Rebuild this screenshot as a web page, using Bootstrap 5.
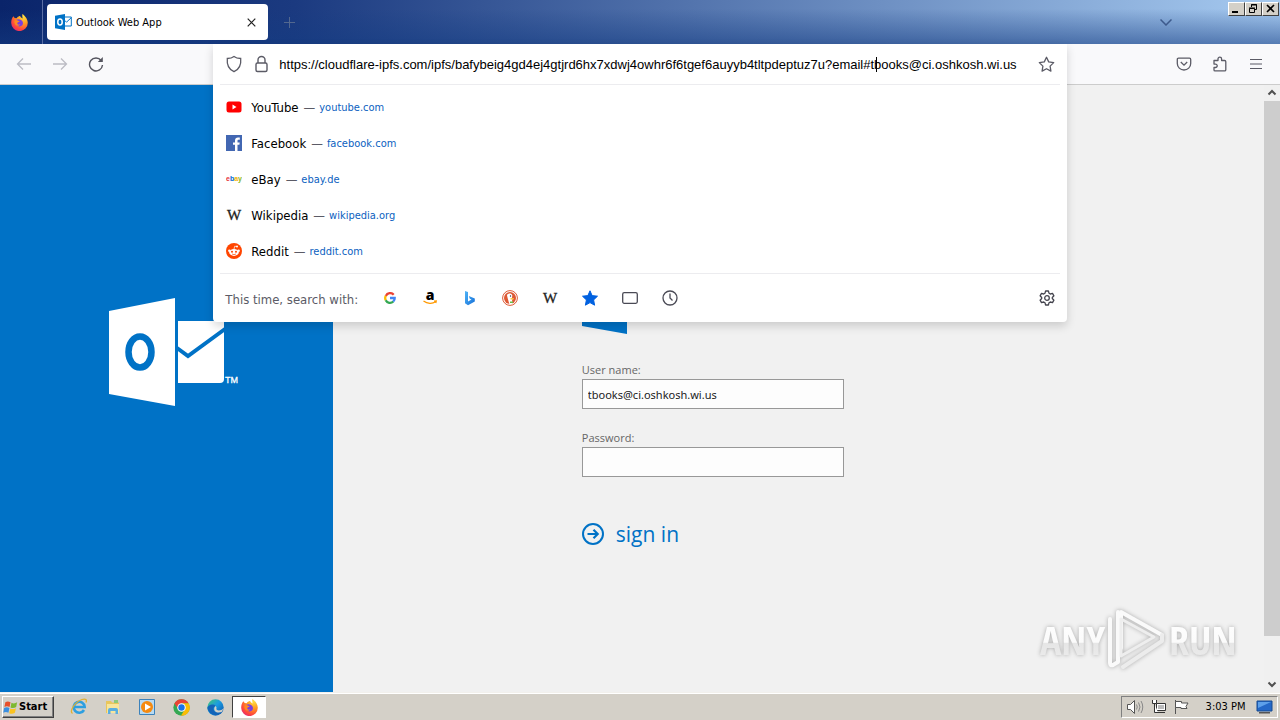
<!doctype html>
<html lang="en">
<head>
<meta charset="utf-8">
<meta name="viewport" content="width=device-width, initial-scale=1">
<title>Outlook Web App</title>
<link href="https://cdn.jsdelivr.net/npm/bootstrap@5.3.0/dist/css/bootstrap.min.css" rel="stylesheet">
<style>
body{font-family:"DejaVu Sans Condensed","Liberation Sans",sans-serif;font-size:13px;line-height:18px;color:#000;background:#f1f1f1}
svg{display:block;flex:none}
button{font:inherit;color:inherit;padding:0;border:0;background:none}
.titlebar{height:44px;background:linear-gradient(180deg,rgba(20,60,130,0) 20%,rgba(20,60,130,.55)),linear-gradient(90deg,#0a246a,#1b3a80 23%,#a6caf0)}
.fx{width:43px;padding-right:3px;border-right:1px solid #5a6ea5}
.tab{width:221px;height:36px;margin:4px 0 0 4px;border-radius:4px;background:#fff;font-size:11px;line-height:20px}
.tab span{padding-top:2px}
.plus{color:#53688f}
.winbtns{padding:2px 1px 0 0}
.winbtn{width:17px;height:14px;background:#d4d0c8;border:1px solid;border-color:#fff #404040 #404040 #fff}
.toolbar{height:41px;background:#f9f9fb;border-bottom:1px solid #ccc;color:#5b5b66}
.urlpanel{top:0;left:0;right:0;z-index:5;background:#fff;border-radius:0 0 4px 4px;box-shadow:0 4px 10px rgba(0,0,0,.16);color:#5b5b66}
.urlrow{height:40px;margin:0 8px 0 12px}
.urlfield{font:13px/18px "Liberation Sans",sans-serif;color:#000;border:0;outline:0;padding:2px 0 0;background:none}
.caret{left:79%;width:1px;top:3px;height:15px;margin-left:-2px;background:#000}
.rule{border-top:1px solid #ececef;margin:0 7px}
.hit{height:36px;color:#000;text-decoration:none;padding-left:13px}
.hit span{padding-top:2px}
.hit .title{margin-left:9px}
.hit .dash{color:#5b5b66;margin:0 4px 0 5px}
.hit .site{color:#0c5fbf;font-size:11px}
.engines{height:48px;padding:0 12px 0 12px}
.engine{width:40px;height:32px}
.side{width:26%;background:#0072c6;padding:213px 0 0 109px}
.login{padding-left:249px;color:#666;font-family:"Open Sans",sans-serif;font-size:11px}
.brand{margin-bottom:28px}
.login label{line-height:16px;margin-bottom:1px}
.second{margin-top:21px}
.login input{width:262px;height:30px;border:1px solid #989898;border-radius:0;background:#fdfdfd;padding:0 5px;color:#222;font:11px "Noto Sans",sans-serif}
.signin{color:#0072c6;font-size:21px;line-height:28px;margin-top:43px}
.scroll{width:16px;background:#f0f0f0}
.thumb{height:93%;background:#cdcdcd}
.watermark{right:44px;bottom:14px;filter:drop-shadow(0 0 2px #aaa)}
.taskbar{height:28px;background:#d4d0c8;border-top:1px solid #f2f0ec;box-shadow:inset 0 1px #fff;color:#000;padding:1px 2px 0}
.startbtn{width:52px;height:22px;background:#d4d0c8;border:1px solid;border-color:#fff #404040 #404040 #fff;box-shadow:inset -1px -1px #808080;font-size:11px;font-weight:700}
.task{width:34px;height:24px}
.task.on{background:#fff;border:1px solid;border-color:#404040 #fff #fff #404040;height:22px}
.tray{height:22px;width:157px;border:1px solid;border-color:#808080 #fff #fff #808080;font-size:11px}
</style>
</head>
<body class="vh-100 d-flex flex-column overflow-hidden">
<svg width="0" height="0" class="position-absolute">
<defs>
<radialGradient id="ff" cx=".75" cy=".15" r="1"><stop offset="0" stop-color="#ffe040"/><stop offset=".4" stop-color="#ff9a20"/><stop offset=".75" stop-color="#ff4a3a"/><stop offset="1" stop-color="#e0207a"/></radialGradient>
<linearGradient id="edge" x2="1" y2="1"><stop offset="0" stop-color="#45c86a"/><stop offset=".45" stop-color="#1b9de2"/><stop offset="1" stop-color="#0c4ea8"/></linearGradient>
<linearGradient id="bing" x2="1" y2="1"><stop offset="0" stop-color="#4fb4f7"/><stop offset="1" stop-color="#1670d8"/></linearGradient>
<linearGradient id="wm" x2="0" y2="1"><stop offset="0" stop-color="#fff"/><stop offset=".55" stop-color="#fbfbfb"/><stop offset=".57" stop-color="#e6e6e6"/><stop offset="1" stop-color="#eee"/></linearGradient>
<symbol id="firefox" viewBox="0 0 16 16"><path d="M2.2 2.2l1.3 1.6 1.8.1C6.500 2.200 8 2 8.600 1.900c.4 1.300 1.400 1.700 2.400 2.300C10.600 2.500 10.400 1.200 10.800 0c1.700 1.300 4.800 4 5 8.200A7.800 7.800 0 0 1 .2 8.400C.1 6 1 3.500 2.200 2.200z" fill="url(#ff)"/><path d="M5 5.500c1-.6 3-.8 4.500.2 1.700 1.200 2.300 3 1.300 4.600-1.200 1.700-4.300 2-5.600-.2C4.600 9 4.600 8 5.300 7.600l2.500-.4C7.600 6.400 6 6.500 5 5.500z" fill="#7a3fe0"/><path d="M3.500 6.200c.8-.6 1.700-.3 2 .3l2.600.2c-.2 1.100-2 .9-2.200 2-.1 1.200 1.400 1.800 2.800.9-.8 1.700-3.400 1.900-4.700.3C3.200 8.900 3 7.400 3.500 6.200z" fill="#ff8a22"/></symbol>
<symbol id="owa" viewBox="0 0 116 108"><path d="M0 13L66 0v108L0 96z" fill="currentColor"/><path d="M69 23h46v58q0 4-4 4H69z" fill="currentColor"/></symbol>
</defs></svg>

<header class="titlebar d-flex flex-shrink-0">
  <div class="fx d-flex align-items-center justify-content-center"><svg width="17" height="17"><use href="#firefox"/></svg></div>
  <div class="tab d-flex align-items-center ps-2 pe-2">
    <svg width="17" height="16" viewBox="0 0 17 16"><path d="M9.500 3h6.800v9H9.500z" fill="#fff" stroke="#0072c6"/><path d="M9.500 6.200l2 2 4.600-4.400" fill="none" stroke="#0072c6"/><path d="M0 1.800L10 0v16L0 14.200z" fill="#0072c6"/><ellipse cx="5" cy="8" rx="2.200" ry="3" fill="none" stroke="#fff" stroke-width="1.500"/></svg>
    <span class="flex-grow-1 ms-1">Outlook Web App</span>
    <button aria-label="Close tab" class="me-1"><svg width="9" height="9" viewBox="0 0 9 9" stroke="#222" stroke-width="1.200"><path d="M.7.7l7.600 7.600M8.300.7L.7 8.300"/></svg></button>
  </div>
  <button class="plus ms-3" aria-label="New tab"><svg width="11" height="11" viewBox="0 0 11 11" stroke="currentColor"><path d="M0 5.500h11M5.500 0v11"/></svg></button>
  <button class="ms-auto me-5" aria-label="List all tabs"><svg width="12" height="7" viewBox="0 0 12 7" fill="none" stroke="#3d5a8c" stroke-width="1.500"><path d="M.5.5L6 6l5.500-5.500"/></svg></button>
  <div class="winbtns d-flex align-items-start ms-2">
    <button class="winbtn" aria-label="Minimize"><svg width="15" height="12" viewBox="0 0 15 12"><path d="M3 8h6v2H3z"/></svg></button>
    <button class="winbtn" aria-label="Restore"><svg width="15" height="12" viewBox="0 0 15 12" fill="none" stroke="#000"><path d="M5.500 4V1.500h5v5H9M5 2h6M3.500 5.500h5v4h-5zM3 5h6"/></svg></button>
    <button class="winbtn" aria-label="Close"><svg width="15" height="12" viewBox="0 0 15 12" stroke="#000" stroke-width="1.600"><path d="M4 2l7 7M11 2L4 9"/></svg></button>
  </div>
</header>

<nav class="toolbar row g-0 flex-shrink-0">
  <div class="col-2 d-flex align-items-center gap-3 ps-3">
    <button aria-label="Back"><svg width="16" height="16" viewBox="0 0 16 16" fill="none" stroke="#bcbcc4" stroke-width="1.300"><path d="M15 8H1.500M7 2.500L1.500 8 7 13.500"/></svg></button>
    <button class="ms-1" aria-label="Forward"><svg width="16" height="16" viewBox="0 0 16 16" fill="none" stroke="#bcbcc4" stroke-width="1.300"><path d="M1 8h13.500M9 2.500L14.500 8 9 13.500"/></svg></button>
    <button class="ms-1" aria-label="Reload"><svg width="16" height="16" viewBox="0 0 16 16" fill="none" stroke="#55555f" stroke-width="1.400"><path d="M13.200 4.500A6.500 6.500 0 1 0 14.500 9"/><path d="M14.800 1v5h-5z" fill="#55555f" stroke="none"/></svg></button>
  </div>
  <div class="col-8 position-relative">
    <div class="urlpanel position-absolute">
      <div class="urlrow d-flex align-items-center">
        <svg width="18" height="18" viewBox="0 0 18 18" fill="none" stroke="currentColor" stroke-width="1.300"><path d="M9 1.500c1.800 1.500 4.200 2 6.700 2 .6 6-1.700 11-6.700 13.200C4 14.500 1.700 9.500 2.300 3.500c2.500 0 4.900-.5 6.700-2z"/></svg>
        <svg class="ms-2 me-2" width="20" height="18" viewBox="0 0 20 18" fill="none" stroke="currentColor" stroke-width="1.400"><rect x="5" y="8" width="11" height="8.500" rx="1.500"/><path d="M7 8V5a3.500 3.500 0 0 1 7 0v3"/></svg>
        <div class="position-relative flex-grow-1">
          <input class="urlfield w-100 d-block" type="text" aria-label="Address" value="https://cloudflare-ipfs.com/ipfs/bafybeig4gd4ej4gtjrd6hx7xdwj4owhr6f6tgef6auyyb4tltpdeptuz7u?email#tbooks@ci.oshkosh.wi.us">
          <span class="caret position-absolute"></span>
        </div>
        <button aria-label="Bookmark this page" class="me-1"><svg width="17" height="17" viewBox="0 0 17 17" fill="none" stroke="currentColor" stroke-width="1.300" stroke-linejoin="round"><path d="M8.500 1.300l2.200 4.600 5 .7-3.600 3.500.8 5-4.400-2.400-4.400 2.400.8-5L1.300 6.600l5-.7z"/></svg></button>
      </div>
      <div class="rule"></div>
      <div class="py-1">
        <a href="#" class="hit d-flex align-items-center"><svg width="16" height="16" viewBox="0 0 16 16"><rect x=".5" y="2.500" width="15" height="11" rx="2.500" fill="#f00"/><path d="M6.500 5.500v5l4-2.500z" fill="#fff"/></svg><span class="title">YouTube</span><span class="dash">—</span><span class="site">youtube.com</span></a>
        <a href="#" class="hit d-flex align-items-center"><svg width="16" height="16" viewBox="0 0 16 16"><path d="M0 0h16v16H0z" fill="#4267b2"/><path d="M9 16V9.800H7V7.400h2V5.600C9 3.600 10.200 2.500 12 2.500h1.800v2.200h-1.200c-.9 0-1.100.4-1.100 1.100v1.600h2.200l-.3 2.400h-1.900V16z" fill="#fff"/></svg><span class="title">Facebook</span><span class="dash">—</span><span class="site">facebook.com</span></a>
        <a href="#" class="hit d-flex align-items-center"><svg width="16" height="16" viewBox="0 0 16 16" font-family="Liberation Sans" font-size="7" font-weight="700"><text x="0" y="10"><tspan fill="#e53238">e</tspan><tspan fill="#0064d2">b</tspan><tspan fill="#f5af02">a</tspan><tspan fill="#86b817">y</tspan></text></svg><span class="title">eBay</span><span class="dash">—</span><span class="site">ebay.de</span></a>
        <a href="#" class="hit d-flex align-items-center"><svg width="16" height="16" viewBox="0 0 16 16"><text x="8" y="13" text-anchor="middle" font-family="Liberation Serif" font-size="15" fill="#222" stroke="#222" stroke-width=".3">W</text></svg><span class="title">Wikipedia</span><span class="dash">—</span><span class="site">wikipedia.org</span></a>
        <a href="#" class="hit d-flex align-items-center"><svg width="16" height="16" viewBox="0 0 16 16"><circle cx="8" cy="8" r="8" fill="#ff4500"/><g fill="#fff"><ellipse cx="8" cy="9.400" rx="4.800" ry="3.500"/><circle cx="3.400" cy="7.800" r="1.300"/><circle cx="12.600" cy="7.800" r="1.300"/><circle cx="11" cy="3.600" r="1"/></g><path d="M8 6l.7-2.800 2.300.4" fill="none" stroke="#fff" stroke-width=".7"/><circle cx="6" cy="8.700" r="1" fill="#ff4500"/><circle cx="10" cy="8.700" r="1" fill="#ff4500"/><path d="M6 11q2 1.300 4 0" fill="none" stroke="#ff4500" stroke-width=".7"/></svg><span class="title">Reddit</span><span class="dash">—</span><span class="site">reddit.com</span></a>
      </div>
      <div class="rule"></div>
      <div class="engines d-flex align-items-center">
        <span class="me-2 pe-1 pt-1">This time, search with:</span>
        <button class="engine d-flex align-items-center justify-content-center" aria-label="Google"><svg width="12" height="12" viewBox="0 0 12 12" fill="none" stroke-width="2.300"><path d="M9.700 2.700A4.800 4.800 0 0 0 1.800 3.900" stroke="#ea4335"/><path d="M1.800 3.700a4.800 4.800 0 0 0 0 4.600" stroke="#fbbc05"/><path d="M1.700 8.200a4.800 4.800 0 0 0 7.600 1.300" stroke="#34a853"/><path d="M9.200 9.600A4.600 4.600 0 0 0 10.700 6H6" stroke="#4285f4"/></svg></button>
        <button class="engine d-flex align-items-center justify-content-center" aria-label="Amazon"><svg width="16" height="20" viewBox="0 -4 16 20" class="mb-1"><text x="8" y="10" text-anchor="middle" font-family="Open Sans" font-weight="800" font-size="14">a</text><path d="M1.500 11c4 3 9 3 12 .8M12 11l2.300-.2-.5 2.200" fill="none" stroke="#f90" stroke-width="1.200"/></svg></button>
        <button class="engine d-flex align-items-center justify-content-center" aria-label="Bing"><svg width="16" height="16" viewBox="0 0 16 16"><path d="M3 1l3 1v9.500l3.500-2-1.700-.8L6.800 6l6 2.400v3L6 15.300l-3-2z" fill="url(#bing)"/></svg></button>
        <button class="engine d-flex align-items-center justify-content-center" aria-label="DuckDuckGo"><svg width="16" height="16" viewBox="0 0 16 16"><circle cx="8" cy="8" r="7.400" fill="#fff" stroke="#de5833"/><circle cx="8" cy="8" r="6" fill="#de5833"/><path d="M5 5.500C5 3 9.500 2.500 10.300 5.300L10 8l2 .7-2 1 .6 4.100a6 6 0 0 1-3.300.1L5.600 8z" fill="#fff"/><circle cx="8.500" cy="6" r=".7" fill="#234"/><path d="M8.500 8.200h3v1.200h-3z" fill="#fdb813"/><path d="M8 11.500h3V13H8z" fill="#67bd47"/></svg></button>
        <button class="engine d-flex align-items-center justify-content-center" aria-label="Wikipedia"><svg width="16" height="16" viewBox="0 0 16 16"><text x="8" y="13" text-anchor="middle" font-family="Liberation Serif" font-size="15" fill="#222" stroke="#222" stroke-width=".3">W</text></svg></button>
        <button class="engine d-flex align-items-center justify-content-center" aria-label="Bookmarks"><svg width="16" height="16" viewBox="0 0 16 16"><path d="M8 .8l2.100 4.800 5.400.6-3.900 3.700 1 5.300L8 12.600l-4.600 2.600 1-5.300L.5 6.200l5.400-.6z" fill="#0061e0" stroke="#0061e0" stroke-linejoin="round"/></svg></button>
        <button class="engine d-flex align-items-center justify-content-center" aria-label="Tabs"><svg width="16" height="16" viewBox="0 0 16 16" fill="none" stroke="#4a4a55" stroke-width="1.300"><rect x=".7" y="2.700" width="14.600" height="10.600" rx="1.500"/></svg></button>
        <button class="engine d-flex align-items-center justify-content-center" aria-label="History"><svg width="16" height="16" viewBox="0 0 16 16" fill="none" stroke="#4a4a55" stroke-width="1.300"><circle cx="8" cy="8" r="7"/><path d="M8 3.500V8l2.500 2.500"/></svg></button>
        <button class="ms-auto" aria-label="Search settings"><svg width="16" height="16" viewBox="0 0 16 16" fill="none" stroke="#44444e" stroke-width="1.300" stroke-linejoin="round"><path d="M6.600 1h2.800l.6 2.200 1.300.8 2.200-.6 1.400 2.400L13.300 7.500v1l1.600 1.700-1.400 2.400-2.200-.6-1.300.8-.6 2.200H6.600L6 12.800 4.700 12l-2.200.6-1.400-2.400 1.600-1.700v-1L1.100 5.800l1.400-2.400 2.200.6L6 3.200z"/><circle cx="8" cy="8" r="2.300"/></svg></button>
      </div>
    </div>
  </div>
  <div class="col-2 d-flex align-items-center justify-content-end gap-3 pe-3">
    <button aria-label="Save to Pocket" class="me-1"><svg width="16" height="16" viewBox="0 0 16 16" fill="none" stroke="currentColor" stroke-width="1.300"><path d="M2.500 2.200h11q1.200 0 1.200 1.200V7.500a6.700 6.500 0 0 1-13.400 0V3.400q0-1.200 1.200-1.200z"/><path d="M4.800 6L8 9.200 11.200 6"/></svg></button>
    <button aria-label="Extensions" class="me-1"><svg width="16" height="16" viewBox="0 0 16 16" fill="none" stroke="currentColor" stroke-width="1.300"><path d="M2 7V4.500h4V3a1.800 1.800 0 0 1 3.600 0v1.500h3q1.200 0 1.200 1.200v8q0 1.200-1.200 1.200H3q-1 0-1-1V11.500h1.500a1.700 1.700 0 0 0 0-3.400H2z" stroke-linejoin="round"/></svg></button>
    <button aria-label="Application menu"><svg width="16" height="16" viewBox="0 0 16 16" stroke="currentColor" stroke-width="1.200"><path d="M2 3.500h12M2 8h12M2 12.500h12"/></svg></button>
  </div>
</nav>

<main class="d-flex flex-grow-1 position-relative">
  <aside class="side">
    <svg width="130" height="109" viewBox="0 0 130 109"><g color="#fff"><use href="#owa" width="116" height="108"/></g><path d="M68 50l11 8L116 31" fill="none" stroke="#0072c6" stroke-width="4"/><ellipse cx="31" cy="54" rx="11.500" ry="15.500" fill="none" stroke="#0072c6" stroke-width="6.500"/><text x="116" y="85" fill="#fff" stroke="#fff" stroke-width=".3" font-family="Liberation Sans" font-size="9">TM</text></svg>
  </aside>
  <section class="flex-grow-1">
    <form class="login pt-5">
      <svg class="brand mt-5" width="260" height="153" viewBox="0 0 260 153"><path d="M0 80L45 71v82L0 145z" fill="#0072c6"/></svg>
      <label class="d-block" for="user">User name:</label>
      <input class="d-block" id="user" type="text" value="tbooks@ci.oshkosh.wi.us">
      <label class="d-block second" for="pass">Password:</label>
      <input class="d-block" id="pass" type="password">
      <button class="signin d-flex align-items-center" type="button"><svg width="22" height="22" viewBox="0 0 22 22" fill="none" stroke="#0072c6" stroke-width="2"><circle cx="11" cy="11" r="10"/><path d="M5.500 11h10M11.500 6.800l4.200 4.200-4.200 4.200" stroke-width="2.200"/></svg><span class="ms-2 ps-1">sign in</span></button>
    </form>
  </section>
  <div class="scroll d-flex flex-column">
    <svg width="16" height="16" viewBox="0 0 16 16" fill="none" stroke="#505050" stroke-width="2"><path d="M4.500 9.500L8 6l3.500 3.500"/></svg>
    <div class="flex-grow-1"><div class="thumb"></div></div>
    <svg width="16" height="16" viewBox="0 0 16 16" fill="none" stroke="#505050" stroke-width="2"><path d="M4.500 6.500L8 10l3.500-3.500"/></svg>
  </div>
  <svg class="watermark position-absolute" width="200" height="76" viewBox="0 0 200 76">
    <g fill="url(#wm)" font-family="Open Sans Condensed" font-weight="300" font-size="40"><text x="4" y="53">ANY</text><text x="133" y="53">RUN</text></g>
    <g fill="none" stroke="#fafafa" stroke-width="4" stroke-linejoin="round" stroke-linecap="round"><path d="M85 46V10l41 23"/><path d="M74 17v44q0 3 3 2l5-3V10"/><path d="M126 33v6L87 65" stroke="#ececec"/><path d="M85 54l33-19-33-18z" stroke="#eee" stroke-width="3"/></g>
  </svg>
</main>

<footer class="taskbar d-flex align-items-center flex-shrink-0">
  <button class="startbtn d-flex align-items-center"><svg width="16" height="17" viewBox="0 0 17 17"><path d="M2.500 3Q5 1 8 3L7 8Q4 6.500 1.500 8z" fill="#e8502a"/><path d="M9 3.500q3 1.500 6-.5L14 8q-3 2-6 .5z" fill="#7db92f"/><path d="M1.200 9Q4 7.500 6.800 9l-1 5Q3 12.500.3 14z" fill="#3a8fe0"/><path d="M7.800 9.500q3 1.500 6-.3l-1.200 5q-3 1.800-6 .3z" fill="#fbc320"/></svg>Start</button>
  <div class="d-flex align-items-center ms-2">
    <button class="task d-flex align-items-center justify-content-center" aria-label="Internet Explorer"><svg width="18" height="18" viewBox="0 0 18 18" fill="none"><path d="M14 12a5.500 5.500 0 1 1 .7-3H5" stroke="#2d9fe0" stroke-width="2.600"/><path d="M2.500 15.500C-1 13 5 4 12 1.500c4-1.300 5 .5 4 3" stroke="#e0b030" stroke-width="1.300"/></svg></button>
    <button class="task d-flex align-items-center justify-content-center" aria-label="Explorer"><svg width="16" height="16" viewBox="0 0 16 16"><path d="M1 2h5l1 1.500h7V14H1z" fill="#e9c65c"/><path d="M2 5h12v9H2z" fill="#f8e59b"/><path d="M3 15v-4q0-2 2-2h6q2 0 2 2v4h-2.500v-3h-5v3z" fill="#5aaee0"/><path d="M9 1h4v3H9z" fill="#8fc97a"/></svg></button>
    <button class="task d-flex align-items-center justify-content-center" aria-label="Media Player"><svg width="16" height="16" viewBox="0 0 16 16"><path d="M.5.5h15v15H.5z" fill="#b8daf2" stroke="#3c82bb"/><circle cx="8" cy="8" r="6" fill="#f58a10"/><path d="M6 4.500v7L12 8z" fill="#fff"/></svg></button>
    <button class="task d-flex align-items-center justify-content-center" aria-label="Chrome"><svg width="17" height="17" viewBox="0 0 16 16"><circle cx="8" cy="8" r="7.700" fill="#34a853"/><path d="M1.300 4.200A7.700 7.700 0 0 1 14.700 4H8L5 9.500z" fill="#ea4335"/><path d="M14.700 4A7.700 7.700 0 0 1 7.500 15.700L11 9.800 9 4z" fill="#fbbc05"/><circle cx="8" cy="8" r="4" fill="#fff"/><circle cx="8" cy="8" r="3" fill="#1a73e8"/></svg></button>
    <button class="task d-flex align-items-center justify-content-center" aria-label="Edge"><svg width="17" height="17" viewBox="0 0 16 16"><circle cx="8" cy="8" r="7.700" fill="url(#edge)"/><path d="M.3 8.500C1 5 6 4 8.200 6.500 5.500 7 5 12 9.500 12.800c2 .3 3.500-.3 4.600-1A7.700 7.700 0 0 1 .3 8.500z" fill="#1464b8"/><path d="M8.200 6.600c1.200 1.200.6 2.200.6 2.900 0 1.600 4.500 2 6.800-.8l-1.500 3.300c-2.500 1.300-6.200 1-7.100-1.500C6.500 9 7 7.300 8.200 6.600z" fill="#d4d0c8"/></svg></button>
    <button class="task on d-flex align-items-center justify-content-center" aria-label="Firefox"><svg width="17" height="17"><use href="#firefox"/></svg></button>
  </div>
  <div class="tray d-flex align-items-center justify-content-between ms-auto px-1">
    <svg width="18" height="16" viewBox="0 0 18 16" fill="#fff" stroke="#555"><path d="M1.500 5.500h3l4-4v13l-4-4h-3z"/><path d="M10.500 5.500q1.500 2.500 0 5M12.500 3.500q3 4.500 0 9M15 2q3.500 6 0 12" fill="none" stroke="#888"/></svg>
    <svg width="16" height="16" viewBox="0 0 16 16" fill="#fff" stroke="#333"><path d="M5.500 4.500h9v7h-9zM7 13.500h7" /><path d="M7 6h6v4H7z" fill="#bbb" stroke="none"/><path d="M1.500 1v3.500h4V1M3.500 4.500v9H7"/></svg>
    <svg width="18" height="16" viewBox="0 0 18 16" fill="#fff" stroke="#555"><path d="M2.500 1v14" /><path d="M2.500 2.500h6v1.500h6.500l-2 3.500 1 2H8V8.500H2.500z"/></svg>
    <span class="ms-2">3:03 PM</span>
    <svg class="ms-1" width="17" height="16" viewBox="0 0 17 16"><path d="M1 2h15v10H1z" fill="#2468c8" stroke="#174a90"/><path d="M2 3h13L2 9z" fill="#5da0ea"/><path d="M3 13h11v1.500H3z" fill="#555"/></svg>
  </div>
</footer>
<script src="https://cdn.jsdelivr.net/npm/bootstrap@5.3.0/dist/js/bootstrap.bundle.min.js"></script>
</body>
</html>
